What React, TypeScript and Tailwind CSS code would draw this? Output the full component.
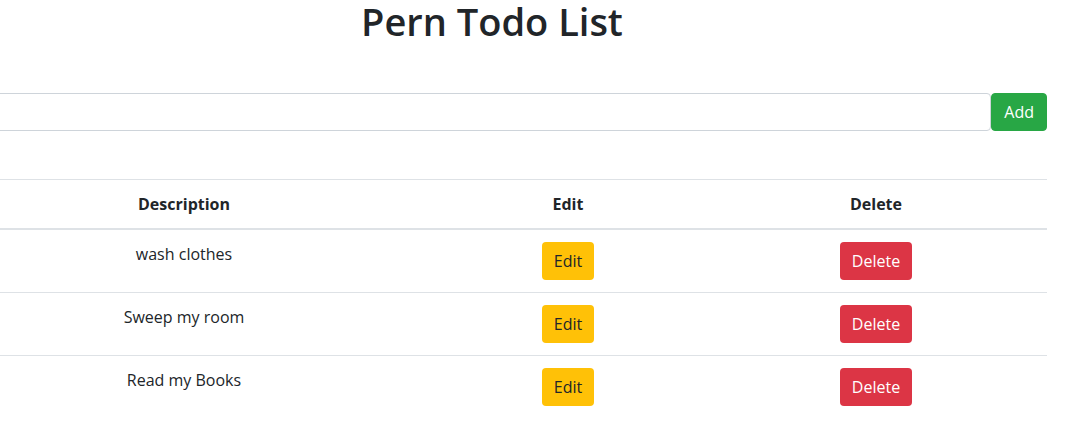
import React from "react";

const todos = ["wash clothes", "Sweep my room", "Read my Books"];

export default function App() {
  return (
    <div
      className="bg-white text-[#212529] min-h-[441px] overflow-hidden"
      style={{ fontFamily: '"Open Sans", "Noto Sans", sans-serif' }}
    >
      <div className="ml-[-63px] w-[1110px]">
        <h1 className="text-center text-[38px] font-semibold leading-[40px] mt-[1px] mb-0 text-[#212529]">
          Pern Todo List
        </h1>
        <div className="flex mt-[52px]">
          <input
            type="text"
            className="flex-1 h-[38px] border border-[#ced4da] rounded-[4px] px-3 text-base outline-none"
          />
          <button className="h-[38px] px-3 bg-[#28a745] text-white text-base rounded-[4px] border border-[#28a745] leading-6">
            Add
          </button>
        </div>
        <table className="mt-[48px] w-full border-collapse text-center text-base">
          <colgroup>
            <col className="w-[494px]" />
            <col className="w-[274px]" />
            <col className="w-[342px]" />
          </colgroup>
          <thead>
            <tr>
              <th className="border-t border-t-[#dee2e6] border-b-2 border-b-[#dee2e6] p-3 font-bold leading-6 align-bottom">
                Description
              </th>
              <th className="border-t border-t-[#dee2e6] border-b-2 border-b-[#dee2e6] p-3 font-bold leading-6 align-bottom">
                Edit
              </th>
              <th className="border-t border-t-[#dee2e6] border-b-2 border-b-[#dee2e6] p-3 font-bold leading-6 align-bottom">
                Delete
              </th>
            </tr>
          </thead>
          <tbody>
            {todos.map((t, i) => (
              <tr key={t}>
                <td className={`p-3 align-top leading-6 ${i > 0 ? "border-t border-t-[#dee2e6]" : ""}`}>{t}</td>
                <td className={`p-3 align-top leading-6 ${i > 0 ? "border-t border-t-[#dee2e6]" : ""}`}>
                  <button className="h-[38px] px-3 bg-[#ffc107] text-[#212529] rounded-[4px] leading-6">
                    Edit
                  </button>
                </td>
                <td className={`p-3 align-top leading-6 ${i > 0 ? "border-t border-t-[#dee2e6]" : ""}`}>
                  <button className="h-[38px] px-3 bg-[#dc3545] text-white rounded-[4px] leading-6">
                    Delete
                  </button>
                </td>
              </tr>
            ))}
          </tbody>
        </table>
      </div>
    </div>
  );
}
